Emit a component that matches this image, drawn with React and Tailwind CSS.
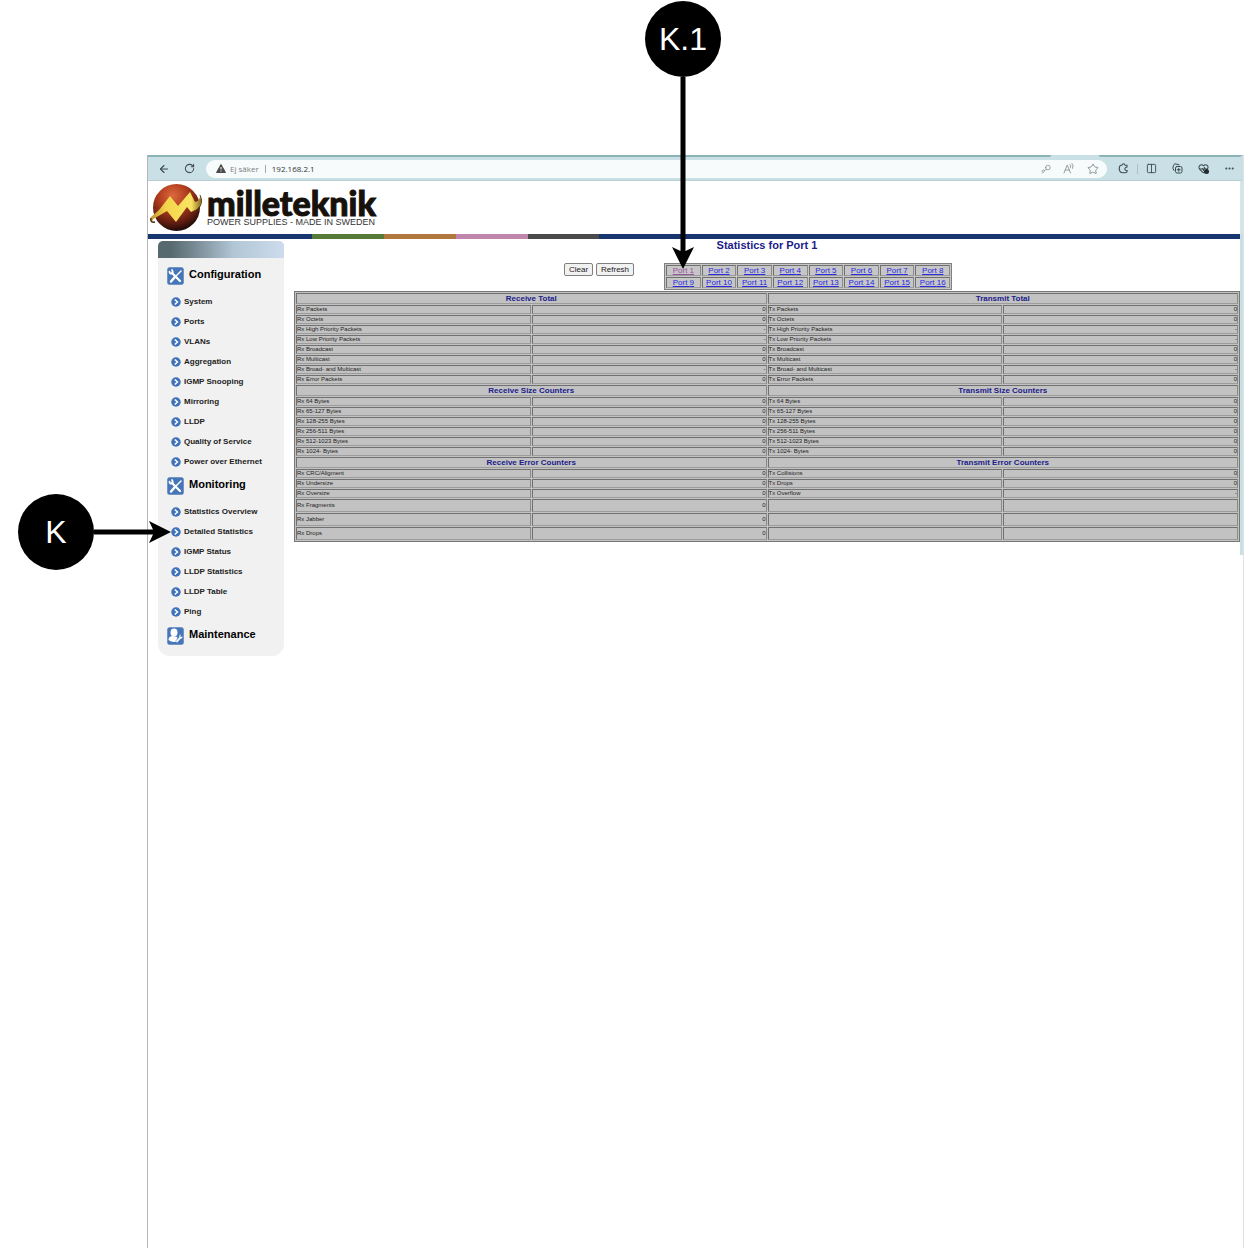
import React from "react";
import { ArrowLeft, RotateCw, Star, Key, Columns2, Ellipsis, HeartPulse } from "lucide-react";

const configuration = ["System", "Ports", "VLANs", "Aggregation", "IGMP Snooping", "Mirroring", "LLDP", "Quality of Service", "Power over Ethernet"];
const monitoring = ["Statistics Overview", "Detailed Statistics", "IGMP Status", "LLDP Statistics", "LLDP Table", "Ping"];

const groups = [
  {
    heads: ["Receive Total", "Transmit Total"],
    rows: [
      ["Packets", "0"],
      ["Octets", "0"],
      ["High Priority Packets", "-"],
      ["Low Priority Packets", "-"],
      ["Broadcast", "0"],
      ["Multicast", "0"],
      ["Broad- and Multicast", "-"],
      ["Error Packets", "0"],
    ].map(([n, v]) => ["Rx " + n, v, "Tx " + n, v]),
  },
  {
    heads: ["Receive Size Counters", "Transmit Size Counters"],
    rows: ["64", "65-127", "128-255", "256-511", "512-1023", "1024-"].map((n) => [`Rx ${n} Bytes`, "0", `Tx ${n} Bytes`, "0"]),
  },
  {
    heads: ["Receive Error Counters", "Transmit Error Counters"],
    rows: [
      ["Rx CRC/Aligment", "0", "Tx Collisions", "0"],
      ["Rx Undersize", "0", "Tx Drops", "0"],
      ["Rx Oversize", "0", "Tx Overflow", "-"],
      ["Rx Fragments", "0", "", ""],
      ["Rx Jabber", "0", "", ""],
      ["Rx Drops", "0", "", ""],
    ],
  },
];

const cell = "border border-t-[#707070] border-l-[#707070] border-b-[#9c9c9c] border-r-[#8a8a8a] p-0";

function Toolbar() {
  return (
    <header className="relative flex h-[26px] items-center border-t-2 border-b border-t-[#8cb3b6] border-b-[#b9cfd2] border-r-[3px] border-r-[#c9dfe3] bg-[#c9e1e6] pr-[5px] pl-[10px] text-[#3c4a4e]">
      <div className="absolute -top-[2px] right-[140px] h-[3px] w-[50px] rounded-t bg-[#c9e1e6]" />
      <button aria-label="Back" className="mr-[14px]"><ArrowLeft size={12} strokeWidth={2.2} /></button>
      <button aria-label="Reload" className="mr-[11px]"><RotateCw size={11} strokeWidth={2.2} /></button>
      <div className="flex h-[18px] flex-1 items-center rounded-full bg-[#f7fbfc] pr-2 pl-[10px] font-['Open_Sans',sans-serif] text-[8px]">
        <svg width="10" height="9" viewBox="0 0 20 18" aria-hidden="true">
          <path d="M10 1 L19 17 H1 Z" fill="#4b4b4b" stroke="#4b4b4b" strokeWidth="2" strokeLinejoin="round" />
          <path d="M10 6 V11 M10 13.2 V15" stroke="#fff" strokeWidth="2" />
        </svg>
        <span className="ml-1 text-[#7b7b7b]">Ej säker</span>
        <span className="mx-[6px] h-2 w-px bg-[#a5a5a5]" />
        <input aria-label="Address" defaultValue="192.168.2.1" className="min-w-0 flex-1 bg-transparent text-[#333] outline-none" />
        <div className="flex items-center gap-[12px] text-[#8d9496]">
          <button aria-label="Passwords"><Key size={10} strokeWidth={2} className="rotate-180" /></button>
          <button aria-label="Read aloud">
            <svg width="12" height="11" viewBox="0 0 24 22" fill="none" stroke="currentColor" strokeWidth="1.8" strokeLinecap="round" aria-hidden="true">
              <path d="M2 20 L8.500 4 L15 20 M4.500 14 H12.500 M14 3 Q16.500 5.500 15 9 M18 1 Q22 5.500 19 11" />
            </svg>
          </button>
          <button aria-label="Favourite"><Star size={12} strokeWidth={2} /></button>
        </div>
      </div>
      <div className="ml-[11px] flex items-center">
        <button aria-label="Extensions">
          <svg width="11" height="11" viewBox="0 0 22 22" fill="none" stroke="currentColor" strokeWidth="2.2" strokeLinecap="round" strokeLinejoin="round" aria-hidden="true">
            <path d="M18 8 V4.500 H14 Q13.500 1.500 11 1.500 Q8.500 1.500 8 4.500 H5.500 Q3.500 5 3 8 Q1.500 12 3.500 16 Q5 19.500 9 19.500 H15 Q18.500 19 18.500 15 Q14 15.500 13.500 12 Q14 8.500 18 8 Z" />
          </svg>
        </button>
        <span className="mr-[8px] ml-2 h-[10px] w-px bg-[#a9c1c5]" />
        <button aria-label="Split screen" className="mr-[15px]"><Columns2 size={11} strokeWidth={2} /></button>
        <button aria-label="Collections" className="mr-[15px]">
          <svg width="11" height="11" viewBox="0 0 22 22" fill="none" stroke="currentColor" strokeWidth="2" strokeLinecap="round" strokeLinejoin="round" aria-hidden="true">
            <rect x="7" y="7" width="13" height="13" rx="3" />
            <path d="M13.500 10.500 V16.500 M10.500 13.500 H16.500 M4 15 Q1 11 2 8 L4 3 Q5 1 8 2 L14 3.500" />
          </svg>
        </button>
        <button aria-label="Browser essentials" className="relative mr-[15px]">
          <HeartPulse size={11} strokeWidth={2.2} />
          <span className="absolute right-0 bottom-0 size-[5px] rounded-full bg-[#222c2e]" />
        </button>
        <button aria-label="More"><Ellipsis size={11} strokeWidth={2.6} /></button>
      </div>
    </header>
  );
}

function Logo() {
  return (
    <div className="flex h-[53px] items-start border-r-[3px] border-[#d3e5e8] pt-[2px] pl-[2px]">
      <svg width="54" height="50" viewBox="0 0 54 50" className="shrink-0" role="img" aria-label="Milleteknik emblem">
        <defs>
          <radialGradient id="ball" cx="42%" cy="25%" r="75%">
            <stop offset="0" stopColor="#dc6a3c" />
            <stop offset="0.4" stopColor="#b23c1e" />
            <stop offset="0.8" stopColor="#5c1b10" />
            <stop offset="1" stopColor="#1d0a08" />
          </radialGradient>
          <linearGradient id="ribbon" x1="0" x2="1">
            <stop offset="0" stopColor="#c4952f" />
            <stop offset="0.3" stopColor="#f4d54a" />
            <stop offset="0.8" stopColor="#f8e463" />
            <stop offset="1" stopColor="#8b6a20" />
          </linearGradient>
        </defs>
        <circle cx="26.500" cy="24.500" r="23.500" fill="url(#ball)" />
        <path d="M1 34 L9 27 L20 13 L28 23 L40 9 L45 19 Q50 18 50 13 Q54 20 47 26 L41 29 L37 24 L26 39 L17 28 L5 35 Q2 36 2 40 Q0 37 1 34 Z" fill="url(#ribbon)" />
        <path d="M1 35 Q0 40 5 39" fill="none" stroke="#4d3514" strokeWidth="1.500" />
        <path d="M50 12 Q54 20 48 26 L43 29" fill="none" stroke="#5f4516" strokeWidth="1" />
      </svg>
      <div className="ml-[3px] pt-[5px] text-[#17110c]">
        <div className="font-[Lato,sans-serif] text-[34px] leading-[30px] font-black [-webkit-text-stroke:1px_#17110c]">milleteknik</div>
        <div className="text-[9px] leading-[9px] whitespace-nowrap text-[#333]">POWER SUPPLIES - MADE IN SWEDEN</div>
      </div>
    </div>
  );
}

function SectionHeading({ label, user }) {
  return (
    <h2 className="flex h-[30px] items-start pt-[5px] pl-[9px] text-[11px] leading-[15px] font-bold text-black">
      <svg width="17" height="18" viewBox="0 0 34 36" className="mr-[5px] shrink-0" aria-hidden="true">
        <rect x="0.500" y="0.500" width="33" height="35" rx="5" fill="#4676b8" />
        {user ? (
          <g fill="#fff">
            <ellipse cx="14" cy="11" rx="7" ry="8" />
            <path d="M3 26 Q3 18 12 18 L21 20 L18 30 Q8 31 3 26 Z" />
            <path d="M17 28 L24 21 Q23 15 28 14 L27 19 L32 19 Q31 24 27 24 L20 32 Z" stroke="#4676b8" strokeWidth="1" />
          </g>
        ) : (
          <g stroke="#fff" strokeLinecap="round" fill="none">
            <path d="M10 12 L26 28" strokeWidth="4.500" />
            <path d="M5 9 Q5 14 10 13 Q13 11 10 6" strokeWidth="3.500" />
            <path d="M28 8 L17 19" strokeWidth="3" />
            <path d="M15 21 L8 29" strokeWidth="5" />
          </g>
        )}
      </svg>
      {label}
    </h2>
  );
}

function Menu({ items }) {
  return (
    <ul>
      {items.map((t) => (
        <li key={t} className="flex h-5 items-center pl-[13px]">
          <a href="#" className="flex items-center gap-[3px] text-[8px] leading-[10px] font-bold whitespace-nowrap text-[#222]">
            <svg width="10" height="10" viewBox="0 0 20 20" aria-hidden="true">
              <circle cx="10" cy="10" r="9.500" fill="#3f73b9" />
              <path d="M7.500 5 L13 10 L7.500 15" fill="none" stroke="#fff" strokeWidth="3" />
            </svg>
            {t}
          </a>
        </li>
      ))}
    </ul>
  );
}

function Sidebar() {
  return (
    <nav className="mt-[2px] ml-[10px] w-[126px] shrink-0 overflow-hidden rounded-t-[5px] rounded-b-[12px] bg-[#f1f1f1] pb-1">
      <div className="mb-1 h-[17px] bg-linear-to-r from-[#57696f] from-10% via-[#b1c6d6] via-60% to-[#cddcec]" />
      <SectionHeading label="Configuration" />
      <Menu items={configuration} />
      <SectionHeading label="Monitoring" />
      <Menu items={monitoring} />
      <SectionHeading label="Maintenance" user />
    </nav>
  );
}

function Ports() {
  return (
    <table className="w-[288px] table-fixed border-separate border-spacing-px border border-[#808080] bg-[#c6c6c6] text-center text-[8px] leading-[9px]">
      <tbody>
        {[0, 8].map((s) => (
          <tr key={s}>
            {[1, 2, 3, 4, 5, 6, 7, 8].map((n) => (
              <td key={n} className={cell}>
                <a href="#" className={s + n === 1 ? "text-[#96529c] underline" : "text-[#2a2ae0] underline"}>Port {s + n}</a>
              </td>
            ))}
          </tr>
        ))}
      </tbody>
    </table>
  );
}

function Counters() {
  return (
    <table className="w-full table-fixed border-separate border-spacing-px border border-[#777] bg-[#c2c2c2] text-[6px] leading-[7px] text-[#222]">
      {groups.map((g) => (
        <tbody key={g.heads[0]}>
          <tr>
            {g.heads.map((h) => (
              <th key={h} colSpan={2} className={`${cell} text-[8px] leading-[9px] text-[#1c1c8a]`}>{h}</th>
            ))}
          </tr>
          {g.rows.map((r) => (
            <tr key={r[0]} className={r[2] ? "" : "leading-[11px]"}>
              {r.map((v, i) => (
                <td key={i} className={`${cell} ${i % 2 ? "text-right" : "text-left"}`}>{v}</td>
              ))}
            </tr>
          ))}
        </tbody>
      ))}
    </table>
  );
}

const button = "rounded-[2px] border border-[#808080] bg-[#f1f1f1] px-1 text-[8px] leading-[11px] text-[#222]";

export default function App() {
  return (
    <div className="relative flex min-h-screen flex-col bg-white pt-[155px] pr-[6px] pl-[147px] font-['Liberation_Sans',Arial,sans-serif]">
      <div className="flex-1 border-r border-l border-r-[#dde3e4] border-l-[#b5b5b5]">
        <Toolbar />
        <Logo />
        <div className="flex h-[5px] border-r-[3px] border-[#c9dfe3] bg-[#17356e]">
          <div className="ml-[164px] w-[72px] bg-[#567a38]" />
          <div className="w-[72px] bg-[#b0783c]" />
          <div className="w-[72px] bg-[#bf86ae]" />
          <div className="w-[71px] bg-[#4a4a4a]" />
        </div>
        <div className="flex items-start">
          <Sidebar />
          <main className="min-w-0 flex-1 border-r-[3px] border-[#c9dfe3] pb-[13px] pl-[10px]">
            <h1 className="text-center text-[11px] leading-[12px] font-bold text-[#1c1c8a]">Statistics for Port 1</h1>
            <div className="mt-3 mb-px flex items-start justify-center pr-[18px]">
              <button className={`${button} mr-[3px]`}>Clear</button>
              <button className={`${button} mr-[30px]`}>Refresh</button>
              <Ports />
            </div>
            <Counters />
          </main>
        </div>
      </div>

      <div className="absolute top-[1px] left-[645px] flex flex-col items-center">
        <div className="flex size-[76px] items-center justify-center rounded-full bg-black text-[32px] leading-[32px] text-white">K.1</div>
        <svg width="24" height="192" viewBox="0 0 24 192" aria-hidden="true">
          <path d="M9.500 0 H14.500 V174 L23 170 L12 192 L1 170 L9.500 174 Z" />
        </svg>
      </div>
      <div className="absolute top-[494px] left-[18px] flex items-center">
        <div className="flex size-[76px] items-center justify-center rounded-full bg-black text-[32px] leading-[32px] text-white">K</div>
        <svg width="77" height="24" viewBox="0 0 77 24" aria-hidden="true">
          <path d="M0 9.500 H59 L55 1 L77 12 L55 23 L59 14.500 H0 Z" />
        </svg>
      </div>
    </div>
  );
}
